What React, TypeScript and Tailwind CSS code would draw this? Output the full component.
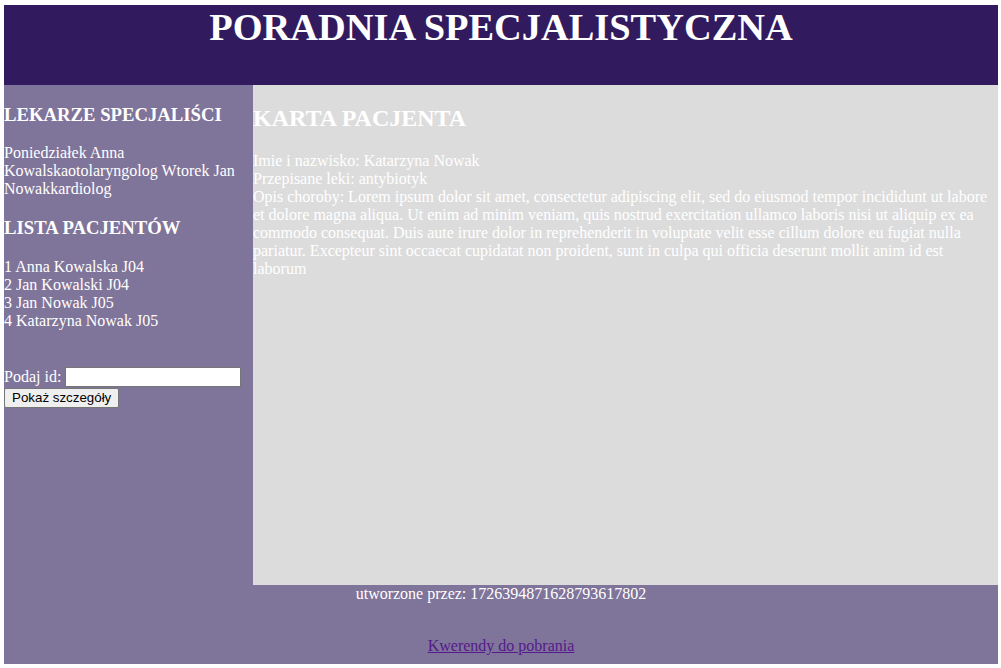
import React from 'react';

// Lista pacjentów (dane statyczne)
const patients = [
  { id: 1, name: 'Anna Kowalska', code: 'J04' },
  { id: 2, name: 'Jan Kowalski', code: 'J04' },
  { id: 3, name: 'Jan Nowak', code: 'J05' },
  { id: 4, name: 'Katarzyna Nowak', code: 'J05' },
];

const lorem =
  'Lorem ipsum dolor sit amet, consectetur adipiscing elit, sed do eiusmod tempor incididunt ut labore et dolore magna aliqua. Ut enim ad minim veniam, quis nostrud exercitation ullamco laboris nisi ut aliquip ex ea commodo consequat. Duis aute irure dolor in reprehenderit in voluptate velit esse cillum dolore eu fugiat nulla pariatur. Excepteur sint occaecat cupidatat non proident, sunt in culpa qui officia deserunt mollit anim id est laborum';

function App() {
  return (
    <div className="min-h-screen bg-white pt-[5px] pl-[4px] pr-[3px] pb-[4px] font-['Liberation_Serif','Times_New_Roman',serif] text-[16px] leading-[normal] text-white">
      {/* BANER */}
      <header className="h-[80px] bg-[#311b5e] text-center">
        <h1 className="text-[38.4px] font-bold">PORADNIA SPECJALISTYCZNA</h1>
      </header>

      <div className="flex h-[500px]">
        {/* LEWY PANEL */}
        <aside className="w-[249px] shrink-0 bg-[#7f7499]">
          <h3 className="my-[18.72px] text-[18.72px] font-bold">LEKARZE SPECJALIŚCI</h3>
          <p className="my-4">Poniedziałek Anna Kowalskaotolaryngolog Wtorek Jan Nowakkardiolog</p>

          <h3 className="my-[18.72px] text-[18.72px] font-bold">LISTA PACJENTÓW</h3>
          <p className="my-4">
            {patients.map((p) => (
              <React.Fragment key={p.id}>
                {p.id} {p.name} {p.code}
                <br />
              </React.Fragment>
            ))}
          </p>

          <form className="mt-[37px]" onSubmit={(e) => e.preventDefault()}>
            <div className="flex items-center">
              <span>Podaj id:</span>
              <input
                type="number"
                className="ml-[4px] h-[20px] w-[176px] border border-[#767676] bg-white px-[2px] text-[13.33px] text-black"
              />
            </div>
            <button
              type="submit"
              className="mt-[1px] h-[20px] rounded-[2px] border border-[#767676] bg-[#efefef] px-[7px] font-['Liberation_Sans',Arial,sans-serif] text-[13.33px] text-black"
            >
              Pokaż szczegóły
            </button>
          </form>
        </aside>

        {/* KARTA PACJENTA */}
        <main className="flex-1 bg-[#dcdcdc]">
          <h2 className="my-[19.92px] text-[24px] font-bold">KARTA PACJENTA</h2>
          <div>
            Imie i nazwisko: Katarzyna Nowak
            <br />
            Przepisane leki: antybiotyk
            <br />
            Opis choroby: {lorem}
          </div>
        </main>
      </div>

      {/* STOPKA */}
      <footer className="h-[79px] bg-[#7f7499] text-center">
        <div>utworzone przez: 1726394871628793617802</div>
        <div className="mt-[34px]">
          <a href="#" className="text-[#551a8b] underline">
            Kwerendy do pobrania
          </a>
        </div>
      </footer>
    </div>
  );
}

export default App;
